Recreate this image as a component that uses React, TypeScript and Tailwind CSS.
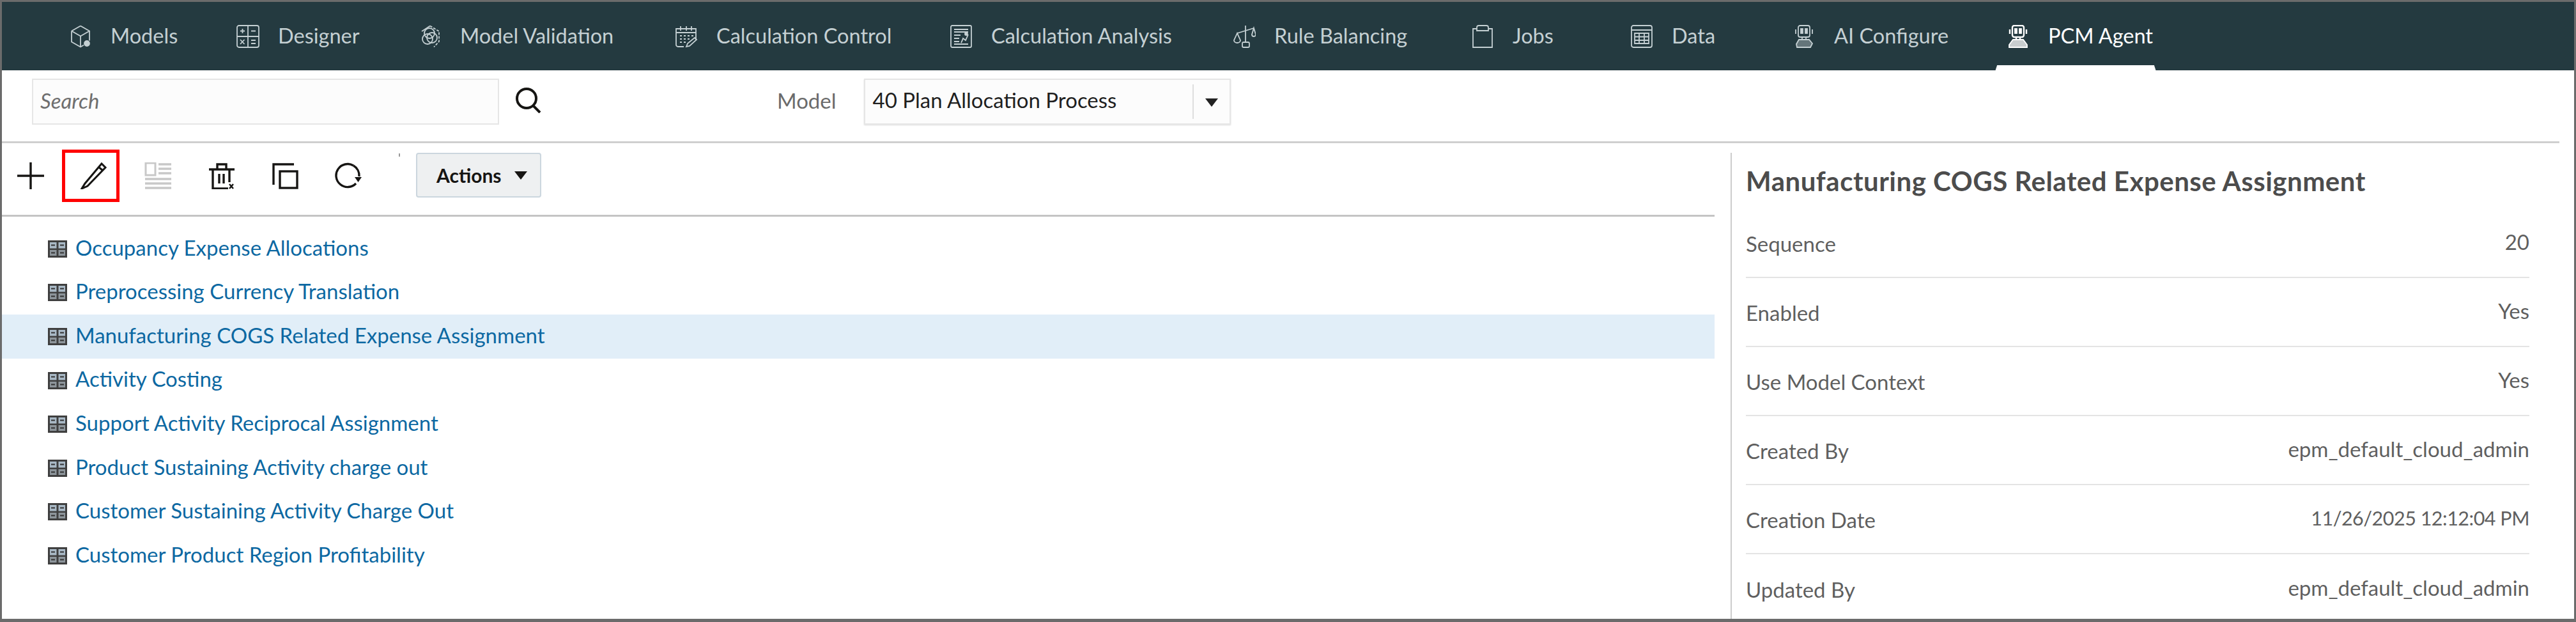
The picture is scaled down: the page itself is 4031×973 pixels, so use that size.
import type { ReactNode } from "react";

const font = "font-['Lato','Liberation_Sans',sans-serif]";

function NavSvg({ children }: { children: ReactNode }) {
  return (
    <svg viewBox="0 0 36 36" fill="none" stroke="currentColor" strokeWidth={1.8} className="h-[36px] w-[36px] shrink-0">
      {children}
    </svg>
  );
}

const navIcons: Record<string, ReactNode> = {
  models: (
    <>
      <path d="M18 1.500 32 9.500v15M4 9.500v17l14 8 5-3M4 9.500l14-8" />
      <path d="M4 9.500l14 8 14-8M18 17.500v17" />
      <circle cx="28" cy="29" r="4" fill="currentColor" />
    </>
  ),
  designer: (
    <>
      <rect x="1" y="1" width="34" height="34" rx="3" />
      <path d="M18 1v34M1 18h34" />
      <path d="M6 9.500h7M9.500 6v7M23 9.500h7M6 23l6.500 7M12.500 23 6 30M23 24h7M23 29h7" />
    </>
  ),
  validation: (
    <>
      <path d="M18 1.500 32 10v16l-8 8.500" strokeDasharray="4 2" />
      <path d="M18 1.500 5 10" />
      <circle cx="14" cy="22" r="8" />
      <circle cx="21" cy="20" r="8" />
      <circle cx="17" cy="13" r="8" />
    </>
  ),
  control: (
    <>
      <path d="M14 34H5a3 3 0 0 1-3-3V6h31v17" />
      <path d="M9 2v7M18 2v7M26 2v7M2 12h31" />
      <path d="M8 17h3M14 17h3M20 17h3M26 17h3M8 22h3M14 22h3M20 22h3M8 27h3M14 27h3" />
      <path d="m18 34 2-5 11-9 3 3-11 10z" />
    </>
  ),
  analysis: (
    <>
      <rect x="2" y="1" width="32" height="34" rx="2" />
      <path d="M7 7h22M7 11h22M7 16h10M7 21h8M7 26h8M7 30h22" />
      <path d="M18 28c2-4 2-4 3-7l4 3 4-9" />
      <circle cx="26" cy="14" r="2" fill="currentColor" />
    </>
  ),
  balancing: (
    <>
      <path d="M20 1v26M7 13 33 5" />
      <path d="M33 5l3 10a3 3 0 0 1-6 0zM7 13l-5 11a5 4 0 0 0 10 0z" />
      <rect x="15" y="27" width="11" height="8" rx="2" />
    </>
  ),
  jobs: (
    <>
      <path d="M9 6H3v29h30V6h-6" />
      <path d="M9 9V4a3 3 0 0 1 3-3h12a3 3 0 0 1 3 3v5z" />
    </>
  ),
  data: (
    <>
      <rect x="2" y="1" width="32" height="34" rx="3" />
      <path d="M2 8h32M7 13h22v16H7zM7 18.500h22M7 24h22M14 13v16M22 13v16" />
    </>
  ),
  ai: (
    <>
      <rect x="9" y="1" width="18" height="18" rx="3" />
      <rect x="13" y="6" width="3" height="7" fill="currentColor" />
      <rect x="20" y="6" width="3" height="7" fill="currentColor" />
      <path d="M5 7v7M31 7v7M15 19v4M21 19v4" />
      <path d="M10 23h16l5 6-3 6H7l-1-5z" fill="currentColor" fillOpacity={0.4} />
    </>
  ),
  agent: (
    <>
      <rect x="9" y="1" width="18" height="18" rx="3" strokeWidth={2.4} />
      <rect x="13" y="6" width="3" height="7" fill="currentColor" />
      <rect x="20" y="6" width="3" height="7" fill="currentColor" />
      <path d="M5 7v7M31 7v7M15 19v4M21 19v4" strokeWidth={2.4} />
      <path d="M10 23h16l6 8v4H4v-4z" fill="currentColor" fillOpacity={0.75} />
    </>
  ),
};

const tabs = [
  { key: "models", label: "Models", cls: "w-[262px]" },
  { key: "designer", label: "Designer", cls: "w-[285px]" },
  { key: "validation", label: "Model Validation", cls: "w-[401px]" },
  { key: "control", label: "Calculation Control", cls: "w-[430px]" },
  { key: "analysis", label: "Calculation Analysis", cls: "w-[443px]" },
  { key: "balancing", label: "Rule Balancing", cls: "w-[373px]" },
  { key: "jobs", label: "Jobs", cls: "w-[249px]" },
  { key: "data", label: "Data", cls: "w-[254px]" },
  { key: "ai", label: "AI Configure", cls: "w-[335px]" },
  { key: "agent", label: "PCM Agent", cls: "w-[240px]" },
];

const rules = [
  "Occupancy Expense Allocations",
  "Preprocessing Currency Translation",
  "Manufacturing COGS Related Expense Assignment",
  "Activity Costing",
  "Support Activity Reciprocal Assignment",
  "Product Sustaining Activity charge out",
  "Customer Sustaining Activity Charge Out",
  "Customer Product Region Profitability",
];

const details = [
  ["Sequence", "20"],
  ["Enabled", "Yes"],
  ["Use Model Context", "Yes"],
  ["Created By", "epm_default_cloud_admin"],
  ["Creation Date", "11/26/2025 12:12:04 PM"],
  ["Updated By", "epm_default_cloud_admin"],
];

function RuleIcon() {
  return (
    <svg viewBox="0 0 30 27" className="h-[27px] w-[30px] shrink-0">
      <rect width="30" height="27" fill="#3f3f3f" />
      <rect x="3" y="3" width="10.500" height="9.500" fill="#a9b9c6" />
      <rect x="16.500" y="3" width="10.500" height="9.500" fill="#a9b9c6" />
      <rect x="3" y="15" width="10.500" height="9" fill="#8d959b" />
      <rect x="16.500" y="15" width="10.500" height="9" fill="#8d959b" />
      <path d="M5 7.500h6M19 7.500h6M5 19.500h6M19 19.500h6" stroke="#333" strokeWidth={2} />
    </svg>
  );
}

function ToolSvg({ children, className }: { children: ReactNode; className?: string }) {
  return (
    <svg viewBox="0 0 42 42" fill="none" stroke="currentColor" strokeWidth={3.4} className={`h-[42px] w-[42px] shrink-0 ${className ?? ""}`}>
      {children}
    </svg>
  );
}

function Caret({ className }: { className: string }) {
  return (
    <svg viewBox="0 0 20 13" className={className}>
      <path d="M0 0h20L10 13z" fill="currentColor" />
    </svg>
  );
}

export default function App() {
  return (
    <div className={`flex h-[973px] w-[4031px] flex-col overflow-hidden border-[3px] border-b-[5px] border-[#6b6b6b] bg-white ${font}`}>
      <nav className="flex h-[107px] shrink-0 items-center bg-[#243a40] pl-[105px] text-[32.5px] text-[#c5d0d3]">
        {tabs.map((t) => (
          <div
            key={t.key}
            className={`relative flex shrink-0 items-center gap-[29px] ${t.cls} ${t.key === "agent" ? "text-white" : ""}`}
          >
            <NavSvg>{navIcons[t.key]}</NavSvg>
            <span className="whitespace-nowrap">{t.label}</span>
            {t.key === "agent" && (
              <div className="absolute bottom-[-37px] left-[-20px] h-[16px] w-[256px] bg-white [clip-path:polygon(2%_0,98%_0,100%_100%,0_100%)]" />
            )}
          </div>
        ))}
      </nav>

      <div className="mr-[23px] flex h-[114px] shrink-0 items-start border-b-[3px] border-[#cfcfcf] pl-[47px] pt-[13px]">
        <div className="flex h-[72px] w-[731px] items-start border-2 border-[#e6e6e6] bg-[#fcfcfc] pl-[11px] pt-[8px] text-[33px] italic text-[#6f6f6f]">
          Search
        </div>
        <svg viewBox="0 0 43 40" fill="none" stroke="#161513" strokeWidth={4} className="ml-[24px] mt-[14px] h-[40px] w-[43px]">
          <circle cx="19" cy="17" r="15" />
          <path d="m29 28 11 11" />
        </svg>
        <span className="ml-[368px] mt-[10px] text-[33px] text-[#6b6b6b]">Model</span>
        <div className="ml-[43px] flex h-[72px] w-[574px] items-start border-2 border-[#e6e6e6] bg-[#fcfcfc] pl-[12px] pt-[7px] text-[33px] text-[#1f1f1f] shadow-[0_1px_2px_#ddd]">
          <span className="w-[500px]">40 Plan Allocation Process</span>
          <div className="flex h-[54px] flex-1 justify-center border-l-2 border-[#dedede] pt-[22px] text-[#222]">
            <Caret className="h-[13px] w-[22px]" />
          </div>
        </div>
      </div>

      <div className="flex min-h-0 flex-1">
        <div className="flex w-[2680px] shrink-0 flex-col">
          <div className="relative flex h-[115px] shrink-0 items-center border-b-[3px] border-[#c4c4c4] text-[#161513]">
            <div className="ml-[24px] mt-[-11px] flex w-[42px] items-center">
              <ToolSvg>
                <path d="M21 0v42M0 21h42" />
              </ToolSvg>
            </div>
            <div className="ml-[28px] mt-[-11px] flex h-[82px] w-[90px] items-center justify-center border-[5px] border-[#ff0000]">
              <ToolSvg className="ml-[10px]">
                <path d="M33 2 7 33 2 41l9-4L39 8z" strokeWidth={3} />
                <path d="m28 7 6 5" strokeWidth={3} />
              </ToolSvg>
            </div>
            <ToolSvg className="ml-[39px] mt-[-11px] text-[#c8c8c8]">
              <rect x="2" y="1" width="15" height="19" strokeWidth={3} />
              <path d="M22 3h20M22 10h20M22 17h20M1 26h41M1 33h41M1 40h41" strokeWidth={3.4} />
            </ToolSvg>
            <ToolSvg className="ml-[58px] mt-[-11px]">
              <path d="M1 11h40M14 11V3h14v8M7 11v30h24" />
              <path d="M17 18v15M24 18v15M33 11v20" />
              <path d="m33 34 6 7m0-7-6 7" strokeWidth={2.5} />
            </ToolSvg>
            <ToolSvg className="ml-[57px] mt-[-11px]">
              <path d="M3 35V3h32" />
              <rect x="13" y="14" width="27" height="26" />
            </ToolSvg>
            <ToolSvg className="ml-[57px] mt-[-11px]">
              <path d="M29 5A18 18 0 1 0 33 33" />
              <path d="M29 5a18 18 0 0 1 9 17" />
              <path d="M31 23h11l-5.500 8z" fill="currentColor" stroke="none" />
            </ToolSvg>
            <span className="absolute left-[621px] top-[16px] h-[5px] w-[2px] bg-[#999]" />
            <button className="ml-[85px] mt-[-12px] flex h-[70px] w-[196px] items-center rounded-[4px] border-2 border-[#cbd6de] bg-[#eef0f1] pl-[30px] text-[30px] font-bold text-[#161513]">
              Actions
              <Caret className="ml-[20px] h-[13px] w-[20px]" />
            </button>
          </div>
          <div className="pt-[16px]">
            {rules.map((r, i) => (
              <div
                key={r}
                className={`flex h-[68.6px] items-center gap-[13px] pl-[72px] text-[33px] text-[#0c68a2] ${i === 2 ? "bg-[#e1eef8]" : ""}`}
              >
                <RuleIcon />
                <span className="mt-[-4px]">{r}</span>
              </div>
            ))}
          </div>
        </div>

        <div className="ml-[25px] mt-[15px] flex min-w-0 flex-1 flex-col border-l-2 border-[#cccccc] pl-[22px] pr-[70px]">
          <div className="flex h-[88px] shrink-0 items-center text-[42px] font-bold tracking-[0.5px] text-[#4c4c4c]">
            Manufacturing COGS Related Expense Assignment
          </div>
          {details.map(([k, v], i) => (
            <div
              key={k}
              className={`flex h-[108px] shrink-0 items-center justify-between pt-[3px] text-[33px] text-[#5f5f5f] ${i < 5 ? "border-b-2 border-[#e4e4e4]" : ""}`}
            >
              <span>{k}</span>
              <span className={`mb-[5px] ${k === "Creation Date" ? "text-[30.5px] tracking-[-0.5px]" : ""}`}>{v}</span>
            </div>
          ))}
        </div>
      </div>
    </div>
  );
}
